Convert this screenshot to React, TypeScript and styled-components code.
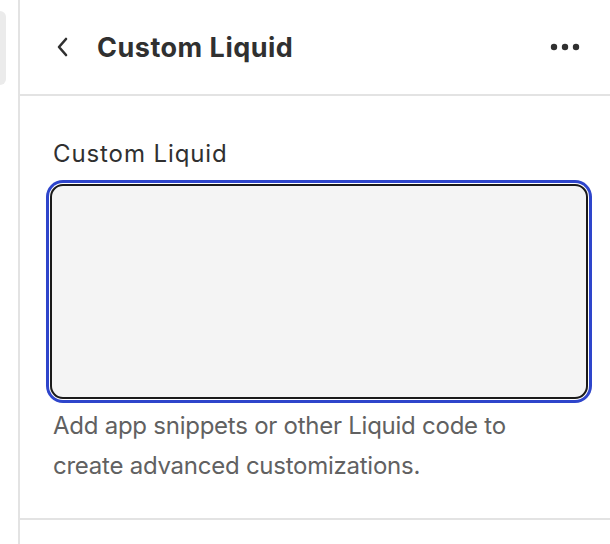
import React from 'react'
import styled, { createGlobalStyle } from 'styled-components'

const GlobalStyle = createGlobalStyle`
  * {
    margin: 0;
    padding: 0;
    box-sizing: border-box;
  }

  body {
    font-family: 'Inter', 'Noto Sans', sans-serif;
    background: #ffffff;
    color: #303030;
    -webkit-font-smoothing: antialiased;
  }
`;

const Layout = styled.div`
  display: flex;
  height: 544px;
  overflow: hidden;
`;

const SideRail = styled.aside`
  width: 20px;
  flex-shrink: 0;
  border-right: 2px solid #e3e3e3;
  padding-top: 11px;
`;

const RailTab = styled.div`
  width: 6px;
  height: 74px;
  background: #ebebeb;
  border-radius: 0 8px 8px 0;
`;

const Panel = styled.section`
  flex: 1;
  min-width: 0;
  display: flex;
  flex-direction: column;
`;

const Header = styled.header`
  height: 96px;
  display: flex;
  align-items: center;
  padding: 0 29px 0 35px;
  border-bottom: 2px solid #e3e3e3;
`;

const IconButton = styled.button`
  border: none;
  background: none;
  padding: 0;
  display: flex;
  align-items: center;
  justify-content: center;
  color: #303030;
  cursor: pointer;
`;

const Title = styled.h1`
  flex: 1;
  margin-left: 26px;
  font-size: 27px;
  font-weight: 700;
  letter-spacing: 0.5px;
  color: #303030;
`;

const Body = styled.div`
  padding: 42px 18px 32px 33px;
  border-bottom: 2px solid #e3e3e3;
`;

const Label = styled.label`
  display: block;
  font-size: 24px;
  line-height: 32px;
  letter-spacing: 0.9px;
  color: #303030;
`;

const CodeInput = styled.textarea`
  display: block;
  width: 538px;
  height: 215px;
  margin: 14px 0 0 -3px;
  background: #f4f4f4;
  border: 2px solid #1a1a1a;
  border-radius: 13px;
  box-shadow: 0 0 0 1px #ffffff, 0 0 0 4px #2e45cb;
  outline: none;
  resize: none;
  font-family: 'Liberation Mono', monospace;
  font-size: 16px;
`;

const HelpText = styled.p`
  margin-top: 7px;
  font-size: 24px;
  line-height: 40px;
  letter-spacing: -0.25px;
  color: #616161;
  max-width: 520px;
`;

function App() {
  return (
    <>
      <GlobalStyle />
      <Layout>
        <SideRail>
          <RailTab />
        </SideRail>
        <Panel>
          <Header>
            <IconButton aria-label="Back">
              <svg width="16" height="22" viewBox="0 0 16 22" fill="none">
                <path d="M11 3 L4 11 L11 19" stroke="currentColor" strokeWidth="2.6" strokeLinecap="round" strokeLinejoin="round" />
              </svg>
            </IconButton>
            <Title>Custom Liquid</Title>
            <IconButton aria-label="More actions">
              <svg width="32" height="8" viewBox="0 0 32 8">
                <circle cx="5" cy="4" r="3.2" fill="currentColor" />
                <circle cx="16" cy="4" r="3.2" fill="currentColor" />
                <circle cx="27" cy="4" r="3.2" fill="currentColor" />
              </svg>
            </IconButton>
          </Header>
          <Body>
            <Label htmlFor="custom-liquid">Custom Liquid</Label>
            <CodeInput id="custom-liquid" />
            <HelpText>
              Add app snippets or other Liquid code to create advanced customizations.
            </HelpText>
          </Body>
        </Panel>
      </Layout>
    </>
  )
}

export default App
